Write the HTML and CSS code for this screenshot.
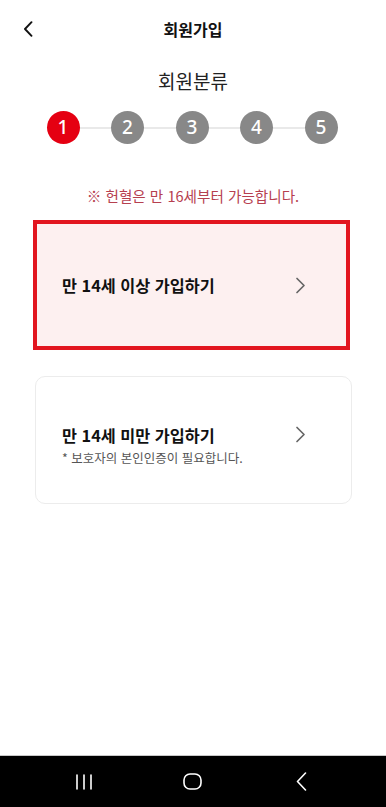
FILE: index.html
```html
<!DOCTYPE html>
<html lang="ko">
<head>
<meta charset="utf-8">
<meta name="viewport" content="width=device-width, initial-scale=1">
<title>회원가입</title>
<link rel="stylesheet" href="styles.css">
</head>
<body>
<div class="screen">
  <header class="topbar">
    <button class="back" aria-label="뒤로">
      <svg width="10" height="16" viewBox="0 0 10 16"><path d="M8.5 1.2 L2 8 L8.5 14.8" fill="none" stroke="#111" stroke-width="1.9" stroke-linecap="round" stroke-linejoin="round"/></svg>
    </button>
    <h1 class="title">회원가입</h1>
    <span class="spacer"></span>
  </header>

  <main class="content">
    <h2 class="section-title">회원분류</h2>
    <ol class="steps">
      <li class="step active">1</li>
      <li class="link"></li>
      <li class="step">2</li>
      <li class="link"></li>
      <li class="step">3</li>
      <li class="link"></li>
      <li class="step">4</li>
      <li class="link"></li>
      <li class="step">5</li>
    </ol>

    <p class="notice">※ 헌혈은 만 16세부터 가능합니다.</p>

    <a class="card card-selected" href="#">
      <div class="card-row">
        <span class="card-title">만 14세 이상 가입하기</span>
        <svg class="chev" width="11" height="17" viewBox="0 0 11 17"><path d="M2 1.5 L9 8.5 L2 15.5" fill="none" stroke="#666" stroke-width="1.7" stroke-linecap="round" stroke-linejoin="round"/></svg>
      </div>
    </a>

    <a class="card card-plain" href="#">
      <div class="card-row">
        <span class="card-title">만 14세 미만 가입하기</span>
        <svg class="chev" width="11" height="17" viewBox="0 0 11 17"><path d="M2 1.5 L9 8.5 L2 15.5" fill="none" stroke="#666" stroke-width="1.7" stroke-linecap="round" stroke-linejoin="round"/></svg>
      </div>
      <p class="card-sub">* 보호자의 본인인증이 필요합니다.</p>
    </a>
  </main>

  <nav class="navbar">
    <span class="nav-item">
      <svg width="18" height="16" viewBox="0 0 18 16"><path d="M2 1 V15 M9 1 V15 M16 1 V15" stroke="#fff" stroke-width="1.6" stroke-linecap="round"/></svg>
    </span>
    <span class="nav-item">
      <svg width="19" height="17" viewBox="0 0 19 17"><rect x="1" y="1" width="17" height="15" rx="6" fill="none" stroke="#fff" stroke-width="1.6"/></svg>
    </span>
    <span class="nav-item">
      <svg width="11" height="19" viewBox="0 0 11 19"><path d="M9.5 1 L1.5 9.5 L9.5 18" fill="none" stroke="#fff" stroke-width="1.6" stroke-linecap="round" stroke-linejoin="round"/></svg>
    </span>
  </nav>
</div>
</body>
</html>
```

FILE: styles.css
```css
* {
  box-sizing: border-box;
}

html, body {
  margin: 0;
  padding: 0;
  background: #fff;
}

body {
  font-family: "Noto Sans CJK KR", "Noto Sans", sans-serif;
  color: #111;
}

.screen {
  width: 386px;
  height: 807px;
  display: flex;
  flex-direction: column;
  overflow: hidden;
}

.topbar {
  height: 58px;
  display: grid;
  grid-template-columns: 60px 1fr 60px;
  align-items: center;
}

.back {
  border: 0;
  background: none;
  padding: 0 0 0 23px;
  height: 58px;
  display: flex;
  align-items: center;
  justify-content: flex-start;
  cursor: pointer;
}

.title {
  margin: 0;
  text-align: center;
  font-size: 16px;
  font-weight: 700;
  line-height: 20px;
  color: #111;
}

.content {
  flex: 1;
  display: flex;
  flex-direction: column;
  align-items: stretch;
}

.section-title {
  margin: 10px 0 0;
  text-align: center;
  font-size: 19px;
  font-weight: 400;
  line-height: 26px;
  color: #222;
}

.steps {
  list-style: none;
  margin: 17px auto 0;
  padding: 0;
  width: 291px;
  display: flex;
  align-items: center;
  transform: translateX(-1px);
}

.step {
  width: 33px;
  height: 33px;
  border-radius: 50%;
  background: #888;
  color: #fff;
  display: flex;
  align-items: center;
  justify-content: center;
  font-family: "Noto Sans", "Open Sans", sans-serif;
  font-size: 19px;
  font-weight: 500;
  line-height: 1;
  flex: none;
}

.step.active {
  background: #e50012;
}

.link {
  flex: 1;
  height: 2px;
  background: #e9e9e9;
}

.notice {
  margin: 42px 0 0;
  text-align: center;
  font-size: 14.6px;
  line-height: 20px;
  color: #b6404f;
}

.card {
  display: flex;
  flex-direction: column;
  justify-content: center;
  text-decoration: none;
  color: #111;
  width: 317px;
}

.card-selected {
  margin: 14px 0 0 33px;
  height: 130px;
  border: 4px solid #e2151f;
  background: #fdf0f0;
  padding: 0 40px 0 25px;
}

.card-plain {
  margin: 26px 0 0 35px;
  height: 128px;
  border: 1px solid #ececec;
  border-radius: 10px;
  background: #fff;
  padding: 9px 45px 0 26px;
}

.card-row {
  display: flex;
  align-items: center;
  justify-content: space-between;
}

.card-title {
  font-size: 16.3px;
  font-weight: 700;
  line-height: 22px;
  color: #111;
}

.chev {
  flex: none;
}

.card-sub {
  margin: 3px 0 0;
  font-size: 12.5px;
  line-height: 17px;
  color: #555;
}

.navbar {
  height: 52px;
  background: #000;
  border-top: 1px solid #c8c8c8;
  display: grid;
  grid-template-columns: 1fr 1fr 1fr;
  align-items: center;
  padding: 0 30px;
}

.nav-item {
  display: flex;
  justify-content: center;
  align-items: center;
}
```
